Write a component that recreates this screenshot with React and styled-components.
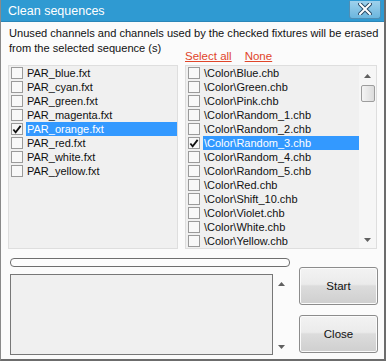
import styled, { createGlobalStyle } from "styled-components";

const GlobalStyle = createGlobalStyle`
  html, body { margin: 0; padding: 0; background: #ffffff; }
  * { box-sizing: border-box; }
`

const fixtures = [
  "PAR_blue.fxt",
  "PAR_cyan.fxt",
  "PAR_green.fxt",
  "PAR_magenta.fxt",
  "PAR_orange.fxt",
  "PAR_red.fxt",
  "PAR_white.fxt",
  "PAR_yellow.fxt",
]

const sequences = [
  "\\Color\\Blue.chb",
  "\\Color\\Green.chb",
  "\\Color\\Pink.chb",
  "\\Color\\Random_1.chb",
  "\\Color\\Random_2.chb",
  "\\Color\\Random_3.chb",
  "\\Color\\Random_4.chb",
  "\\Color\\Random_5.chb",
  "\\Color\\Red.chb",
  "\\Color\\Shift_10.chb",
  "\\Color\\Violet.chb",
  "\\Color\\White.chb",
  "\\Color\\Yellow.chb",
]

function Check({ checked }) {
  return (
    <Box>
      {checked && (
        <svg width="11" height="11" viewBox="0 0 11 11">
          <path d="M1.5 5.5 L4 8.5 L9.5 1.5" fill="none" stroke="#111" strokeWidth="2" />
        </svg>
      )}
    </Box>
  )
}

function Arrow({ down }) {
  return (
    <svg width="7" height="4" viewBox="0 0 7 4">
      <path d={down ? "M0 0 L7 0 L3.5 4 Z" : "M0 4 L7 4 L3.5 0 Z"} fill="#606060" />
    </svg>
  )
}

function App() {
  return (
    <Window>
      <GlobalStyle />
      <TitleBar>
        <span>Clean sequences</span>
        <CloseX>
          <svg width="14" height="12" viewBox="0 0 14 12">
            <path d="M2 1 L12 11 M12 1 L2 11" stroke="#2a4a66" strokeWidth="4" strokeLinecap="square" />
            <path d="M2 1 L12 11 M12 1 L2 11" stroke="#ffffff" strokeWidth="2" strokeLinecap="square" />
          </svg>
        </CloseX>
      </TitleBar>
      <Body>
        <Description>
          Unused channels and channels used by the checked fixtures will be erased<br />
          from the selected sequence (s)
        </Description>
        <LinkRow>
          <LinkText>Select all</LinkText>
          <LinkText>None</LinkText>
        </LinkRow>
        <ListsRow>
          <ListBox $width={170}>
            <Items>
              {fixtures.map((name) => (
                <Row key={name}>
                  <Check checked={name === "PAR_orange.fxt"} />
                  <Label $selected={name === "PAR_orange.fxt"}>{name}</Label>
                </Row>
              ))}
            </Items>
          </ListBox>
          <ListBox $width={192}>
            <Items>
              {sequences.map((name) => (
                <Row key={name}>
                  <Check checked={name.endsWith("Random_3.chb")} />
                  <Label $selected={name.endsWith("Random_3.chb")}>{name}</Label>
                </Row>
              ))}
            </Items>
            <ScrollBar>
              <ArrowCell><Arrow /></ArrowCell>
              <Thumb />
              <Spacer />
              <ArrowCell><Arrow down /></ArrowCell>
            </ScrollBar>
          </ListBox>
        </ListsRow>
        <BottomRow>
          <LeftColumn>
            <Progress />
            <LogArea>
              <LogBox />
              <ScrollBar $plain>
                <ArrowCell><Arrow /></ArrowCell>
                <Spacer />
                <ArrowCell><Arrow down /></ArrowCell>
              </ScrollBar>
            </LogArea>
          </LeftColumn>
          <ButtonColumn>
            <Button>Start</Button>
            <Button>Close</Button>
          </ButtonColumn>
        </BottomRow>
      </Body>
    </Window>
  )
}

export default App


const Window = styled.div`
  width: 386px;
  height: 361px;
  display: flex;
  flex-direction: column;
  background: #fbfbfb;
  border-left: 1px solid #8a8a8a;
  border-right: 2px solid #6c6c6c;
  border-bottom: 2px solid #6c6c6c;
  font-family: "Liberation Sans", Arial, sans-serif;
  font-size: 11px;
  color: #111111;
  overflow: hidden;
`

const TitleBar = styled.div`
  height: 22px;
  flex-shrink: 0;
  display: flex;
  align-items: center;
  justify-content: space-between;
  padding: 0 5px 0 8px;
  background: #2f9ad2;
  color: #ffffff;
  font-size: 12.5px;
  margin-left: -1px;
  margin-right: -2px;
  border-bottom: 1px solid #2a86b8;
`

const CloseX = styled.div`
  width: 32px;
  height: 18px;
  margin-top: -2px;
  display: flex;
  align-items: center;
  justify-content: center;
  background: linear-gradient(#9fd1ec, #6bb6de);
  border: 1px solid #4f8fb5;
  border-top: none;
  border-radius: 0 0 3px 3px;
`

const Body = styled.div`
  flex: 1;
  display: flex;
  flex-direction: column;
  padding: 4px 7px 0 7px;
`

const Description = styled.div`
  line-height: 15px;
  padding-left: 1px;
  white-space: nowrap;
  font-size: 11.1px;
`

const LinkRow = styled.div`
  display: flex;
  gap: 13px;
  padding-left: 177px;
  height: 12px;
  margin-top: -6px;
  line-height: 12px;
`

const LinkText = styled.span`
  color: #e0452a;
  text-decoration: underline;
  font-size: 11.5px;
`

const ListsRow = styled.div`
  display: flex;
  align-items: flex-start;
  gap: 7px;
  margin-top: 3px;
`

const ListBox = styled.div`
  width: ${(p) => p.$width}px;
  height: 184px;
  display: flex;
  background: #f0f0f0;
  border: 1px solid #dedede;
  overflow: hidden;
`

const Items = styled.div`
  flex: 1;
  display: flex;
  flex-direction: column;
  padding: 0 0 0 2px;
`

const Row = styled.div`
  height: 14px;
  display: flex;
  align-items: center;
  gap: 3px;
`

const Box = styled.div`
  width: 12px;
  height: 12px;
  flex-shrink: 0;
  display: flex;
  align-items: center;
  justify-content: center;
  background: #f8f8f8;
  border: 1px solid #9a9a9a;
`

const Label = styled.div`
  flex: 1;
  height: 14px;
  line-height: 14px;
  padding-left: 1px;
  white-space: nowrap;
  color: ${(p) => (p.$selected ? "#ffffff" : "#111111")};
  background: ${(p) => (p.$selected ? "#3399ff" : "transparent")};
`

const ScrollBar = styled.div`
  width: 17px;
  flex-shrink: 0;
  display: flex;
  flex-direction: column;
  align-items: center;
  background: ${(p) => (p.$plain ? "transparent" : "#f6f6f6")};
  padding: 4px 0 2px;
`

const ArrowCell = styled.div`
  height: 12px;
  display: flex;
  align-items: center;
  justify-content: center;
`

const Thumb = styled.div`
  width: 14px;
  height: 17px;
  margin-top: 3px;
  border: 1px solid #9d9d9d;
  border-radius: 2px;
  background: linear-gradient(90deg, #f4f4f4, #dcdcdc);
`

const Spacer = styled.div`
  flex: 1;
`

const BottomRow = styled.div`
  display: flex;
  align-items: flex-start;
  margin-top: 9px;
  gap: 9px;
`

const LeftColumn = styled.div`
  width: 282px;
  display: flex;
  flex-direction: column;
  gap: 7px;
`

const Progress = styled.div`
  width: 280px;
  height: 9px;
  margin-left: 2px;
  border: 1px solid #6f6f6f;
  border-radius: 4px;
  background: #fdfdfd;
`

const LogArea = styled.div`
  display: flex;
  height: 81px;
`

const LogBox = styled.div`
  flex: 1;
  margin-left: 2px;
  background: #f0f0f0;
  border: 1px solid #777777;
`

const ButtonColumn = styled.div`
  display: flex;
  flex-direction: column;
  gap: 10px;
  padding-top: 9px;
`

const Button = styled.div`
  width: 79px;
  height: 38px;
  display: flex;
  align-items: center;
  justify-content: center;
  font-size: 11.5px;
  border: 1px solid #8c8c8c;
  border-radius: 3px;
  background: linear-gradient(#f3f3f3 0%, #ebebeb 45%, #dcdcdc 50%, #cfcfcf 100%);
  box-shadow: inset 0 0 0 1px #fbfbfb;
`
